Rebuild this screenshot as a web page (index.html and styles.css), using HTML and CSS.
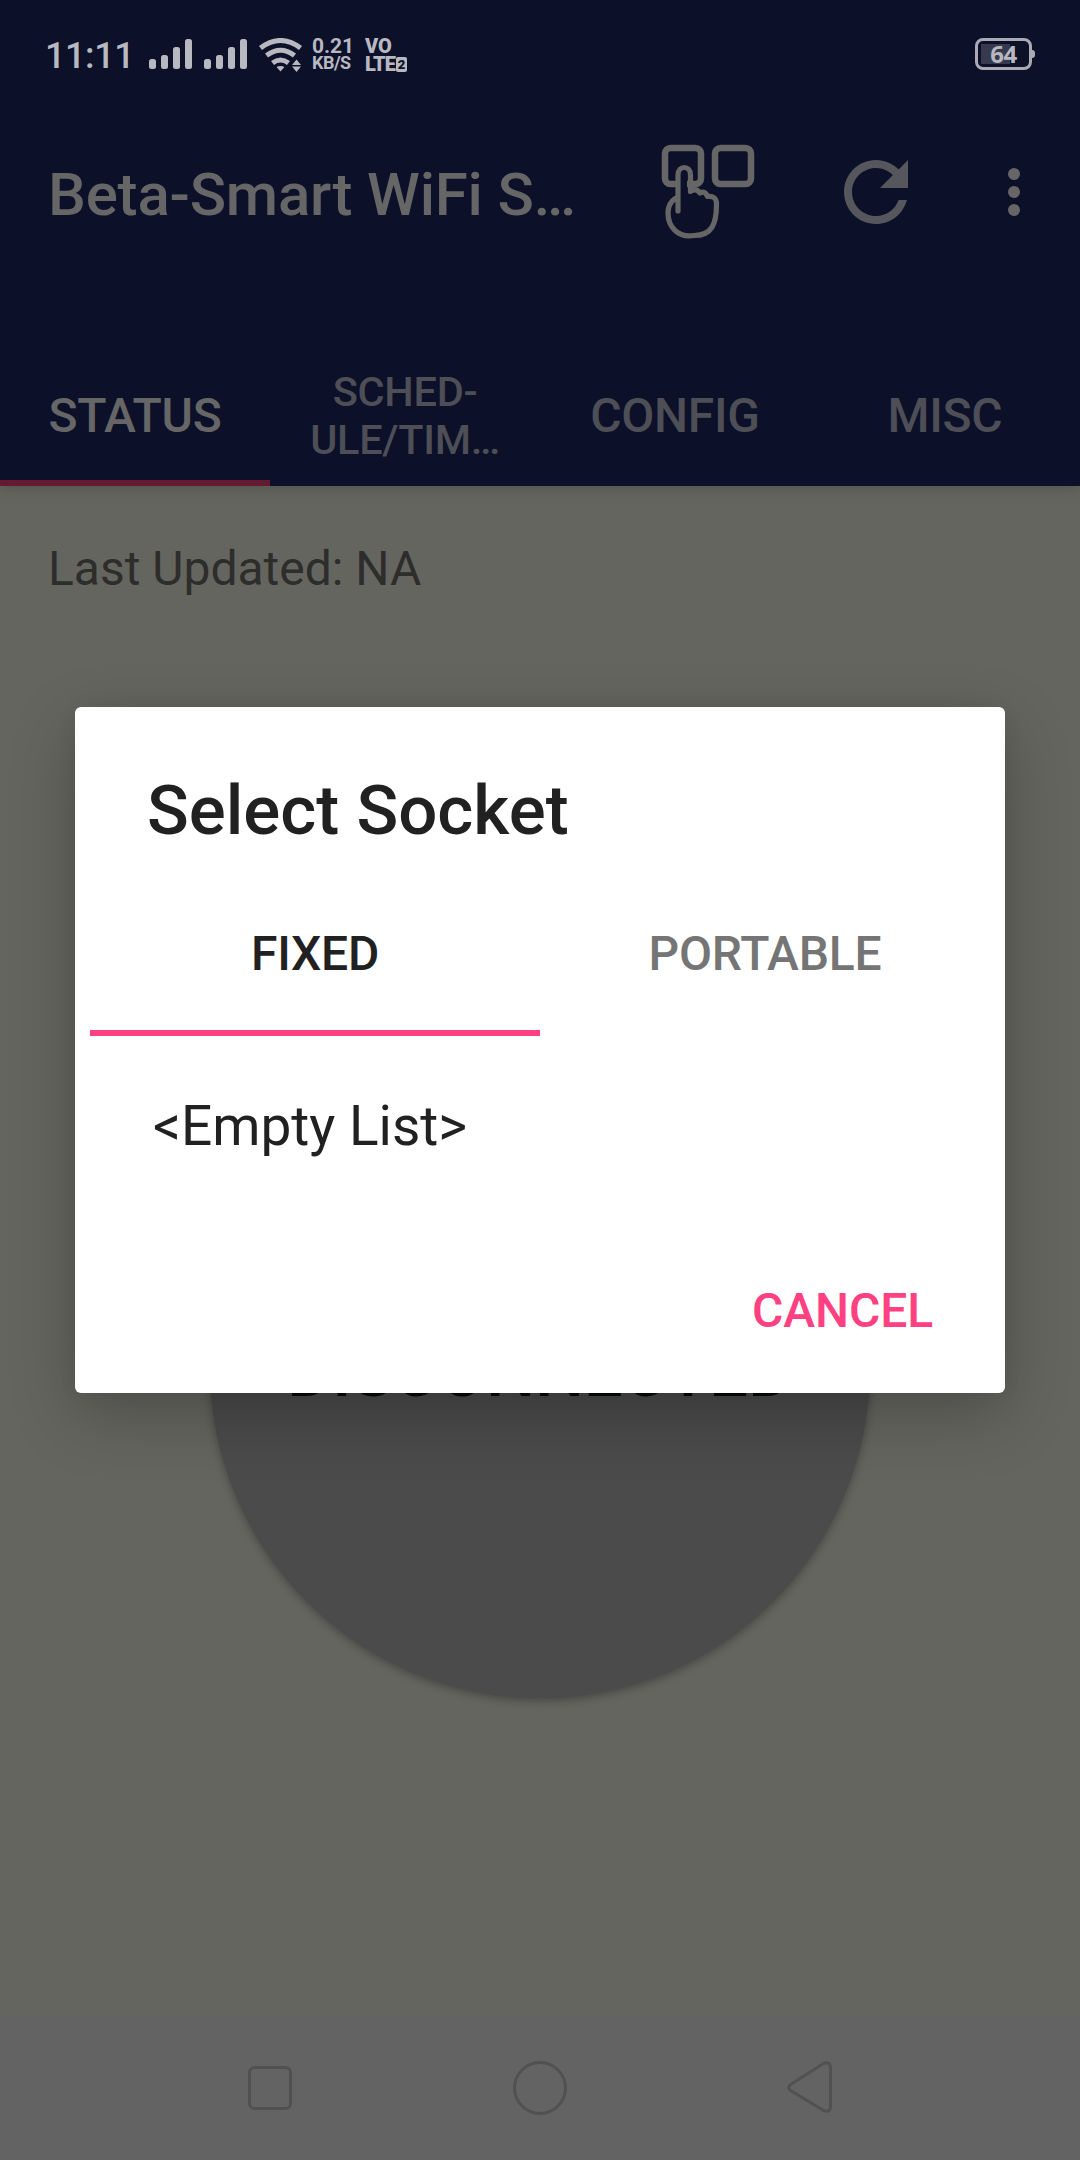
FILE: index.html
```html
<!DOCTYPE html>
<html lang="en">
<head>
<meta charset="utf-8">
<title>Beta-Smart WiFi Socket</title>
<link rel="stylesheet" href="styles.css">
</head>
<body>
<div class="screen">
  <header class="header">
    <div class="statusbar">
      <span class="clock">11:11</span>
      <svg class="signals" width="98" height="30" viewBox="0 0 98 30" fill="currentColor">
        <rect x="0" y="20" width="7" height="10" rx="2.5"/><rect x="12" y="16" width="7" height="14" rx="2.5"/><rect x="24" y="8" width="7" height="22" rx="2.5"/><rect x="36" y="0" width="7" height="30" rx="2.5"/>
        <rect x="55" y="20" width="7" height="10" rx="2.5"/><rect x="67" y="16" width="7" height="14" rx="2.5"/><rect x="79" y="8" width="7" height="22" rx="2.5"/><rect x="91" y="0" width="7" height="30" rx="2.5"/>
      </svg>
      <svg class="wifi" width="44" height="34" viewBox="0 0 44 34">
        <g fill="none" stroke="currentColor" stroke-width="5"><path d="M1.500 10Q21.500-5 41.500 10"/><path d="M7.500 17.500Q21.500 7 35.500 17.500"/><path d="M13.500 25Q21.500 19 29.500 25"/></g>
        <path fill="currentColor" d="M17.500 29Q21.500 27 25.500 29L21.500 33.500zM37.500 21.500L42 27H33zM33 28.500H42L37.500 34z"/>
      </svg>
      <span class="speed"><span class="speed-value">0.21</span><span class="speed-unit">KB/S</span></span>
      <span class="volte"><span>VO</span><span class="lte">LTE<span class="sim">2</span></span></span>
      <span class="battery"><span class="battery-level">64</span></span>
    </div>
    <div class="toolbar">
      <h1 class="title">Beta-Smart WiFi S…</h1>
      <svg class="pick-icon" width="96" height="98" viewBox="0 0 96 98" fill="none" stroke="currentColor">
        <rect x="5" y="4" width="36" height="36" rx="5.500" stroke-width="6.500"/>
        <rect x="55" y="4" width="36" height="36" rx="5.500" stroke-width="6.500"/>
        <path class="hand-fill" stroke="none" d="M19 67V31C19 24 27 24 27 31V48L54 56V75L45 89H20L9 76V60L19 54z"/>
        <path stroke-width="5.200" stroke-linecap="round" stroke-linejoin="round" d="M18 67V31C18 21 30.500 21 30.500 31V47.500Q36 43.500 40 49Q45 46 47.500 52.500Q56.500 51.500 56.500 60C56.500 80 52 91.500 34 91.500C17 94 8 82 8 69Q8 59 16 54"/>
      </svg>
      <svg class="refresh-icon" width="64" height="64" viewBox="4 4 16 16" fill="currentColor">
        <path d="M17.650 6.350C16.200 4.900 14.210 4 12 4c-4.420 0-7.990 3.580-7.990 8s3.570 8 7.990 8c3.730 0 6.840-2.550 7.730-6h-2.080c-.82 2.330-3.040 4-5.650 4-3.310 0-6-2.690-6-6s2.690-6 6-6c1.660 0 3.140.69 4.220 1.780L13 11h7V4l-2.350 2.350z"/>
      </svg>
      <svg class="more-icon" width="12" height="48" viewBox="0 0 12 48" fill="currentColor"><circle cx="6" cy="6" r="6"/><circle cx="6" cy="24" r="6"/><circle cx="6" cy="42" r="6"/></svg>
    </div>
    <nav class="tabs">
      <span class="tab active">STATUS</span>
      <span class="tab small">SCHED-<br>ULE/TIM…</span>
      <span class="tab">CONFIG</span>
      <span class="tab">MISC</span>
    </nav>
  </header>
  <main class="content">
    <p class="updated">Last Updated: NA</p>
    <div class="state">DISCONNECTED</div>
  </main>
  <footer class="navbar">
    <svg width="48" height="60" viewBox="0 0 48 60"><rect x="4.500" y="9.500" width="41" height="41" rx="5"/></svg>
    <svg width="60" height="60" viewBox="0 0 60 60"><circle cx="30" cy="30" r="25.500"/></svg>
    <svg width="48" height="60" viewBox="0 0 48 60"><path d="M3.500 26.500L36.500 5.500Q43.500 3 43.500 10V48Q43.500 55 36.500 52.500L3.500 32.500Q0 29.500 3.500 26.500z"/></svg>
  </footer>
  <section class="dialog">
    <h2 class="dialog-title">Select Socket</h2>
    <div class="dialog-tabs">
      <span class="dialog-tab selected">FIXED</span>
      <span class="dialog-tab">PORTABLE</span>
    </div>
    <p class="empty">&lt;Empty List&gt;</p>
    <button class="cancel">CANCEL</button>
  </section>
</div>
</body>
</html>
```
FILE: styles.css
```css
* { box-sizing: border-box; margin: 0; padding: 0; }
body { font-family: Roboto, "Noto Sans", sans-serif; background: #656560; }
.screen { position: relative; width: 1080px; height: 2160px; display: flex; flex-direction: column; overflow: hidden; background: #656560; }
.header { position: relative; z-index: 1; height: 486px; display: flex; flex-direction: column; background: #0c1029; color: #666; box-shadow: 0 2px 14px rgba(0, 0, 0, .18); }

.statusbar { height: 108px; padding: 0 45px; display: flex; align-items: center; color: #b8b8c1; }
.clock { width: 104px; font-size: 36px; line-height: 42px; font-weight: 500; letter-spacing: -.4px; padding-top: 3px; }
.wifi { margin: 1px 0 0 12px; }
.speed { width: 52px; margin-left: 9px; display: flex; flex-direction: column; font-weight: 700; }
.speed-value { font-size: 21px; line-height: 17px; letter-spacing: -.1px; }
.speed-unit { font-size: 18px; line-height: 16px; letter-spacing: -.5px; }
.volte { margin: 2px 0 0 1px; display: flex; flex-direction: column; font-size: 20px; font-weight: 900; line-height: 18px; }
.lte { display: flex; align-items: center; gap: 1px; letter-spacing: -.9px; }
.sim { width: 11px; height: 15px; background: #b8b8c1; color: #0c1029; font-size: 13px; line-height: 15px; text-align: center; letter-spacing: 0; border-radius: 2px; }
.battery { position: relative; width: 57px; height: 32px; margin-left: auto; margin-right: 3px; border: 3px solid #a9aab3; border-radius: 8px; padding: 3px; display: flex; background: linear-gradient(#373a4e, #373a4e) 3px 3px / 29px 20px no-repeat; }
.battery::after { content: ""; position: absolute; left: 54px; top: 9px; width: 3px; height: 8px; background: #a9aab3; border-radius: 0 4px 4px 0; }
.battery-level { width: 100%; text-align: center; font: 700 24px/20px "Noto Sans", sans-serif; letter-spacing: -.5px; }

.toolbar { height: 168px; padding: 0 60px 0 48px; display: flex; align-items: center; }
.title { width: 612px; padding-top: 5px; font-size: 60px; line-height: 72px; font-weight: 500; letter-spacing: -.2px; white-space: nowrap; }
.pick-icon { margin: 1px 88px 0 0; }
.hand-fill { fill: #0c1029; }
.refresh-icon { margin-right: 100px; color: #56575c; }

.tabs { flex: 1; display: grid; grid-template-columns: repeat(4, 1fr); }
.tab { display: flex; align-items: center; justify-content: center; text-align: center; padding-top: 76px; font-size: 48px; line-height: 56px; font-weight: 500; letter-spacing: -.3px; color: #4d4e56; border-bottom: 6px solid transparent; }
.tab.active { color: #666; border-color: #661933; }
.tab.small { font-size: 41.500px; line-height: 48px; }

.content { flex: 1; display: flex; flex-direction: column; align-items: center; }
.updated { align-self: stretch; padding: 55px 48px 0; font-size: 48px; line-height: 56px; color: #2d2d2b; }
.state { width: 660px; height: 660px; margin-top: 441px; padding-top: 8px; border-radius: 50%; display: flex; align-items: center; justify-content: center; background: #4b4b4b; color: #050a0a; font-size: 69px; font-weight: 500; box-shadow: 0 3px 9px rgba(0, 0, 0, .3); }

.navbar { height: 144px; padding: 0 245px; display: flex; align-items: center; justify-content: space-between; background: #636363; }
.navbar svg { fill: none; stroke: #515151; stroke-width: 3; }

.dialog { position: absolute; z-index: 2; left: 75px; top: 707px; width: 930px; height: 686px; display: flex; flex-direction: column; background: #fff; color: #212121; border-radius: 6px; box-shadow: 0 22px 66px rgba(0, 0, 0, .24), 0 0 20px rgba(0, 0, 0, .06); }
.dialog-title { padding: 64px 72px 0; font-size: 69px; line-height: 80px; font-weight: 500; }
.dialog-tabs { margin: 41px 15px 0; height: 144px; display: grid; grid-template-columns: 1fr 1fr; }
.dialog-tab { display: flex; align-items: center; justify-content: center; padding-bottom: 16px; font-size: 48px; font-weight: 500; letter-spacing: -.2px; color: #757575; border-bottom: 6px solid transparent; }
.dialog-tab.selected { color: #212121; border-color: #ff4081; }
.empty { padding: 58px 78px 0; font-size: 55px; line-height: 64px; }
.cancel { margin: 125px 72px 0 0; align-self: flex-end; border: 0; background: none; color: #ff4081; font: 500 48px/56px Roboto, sans-serif; letter-spacing: -.1px; }
```
